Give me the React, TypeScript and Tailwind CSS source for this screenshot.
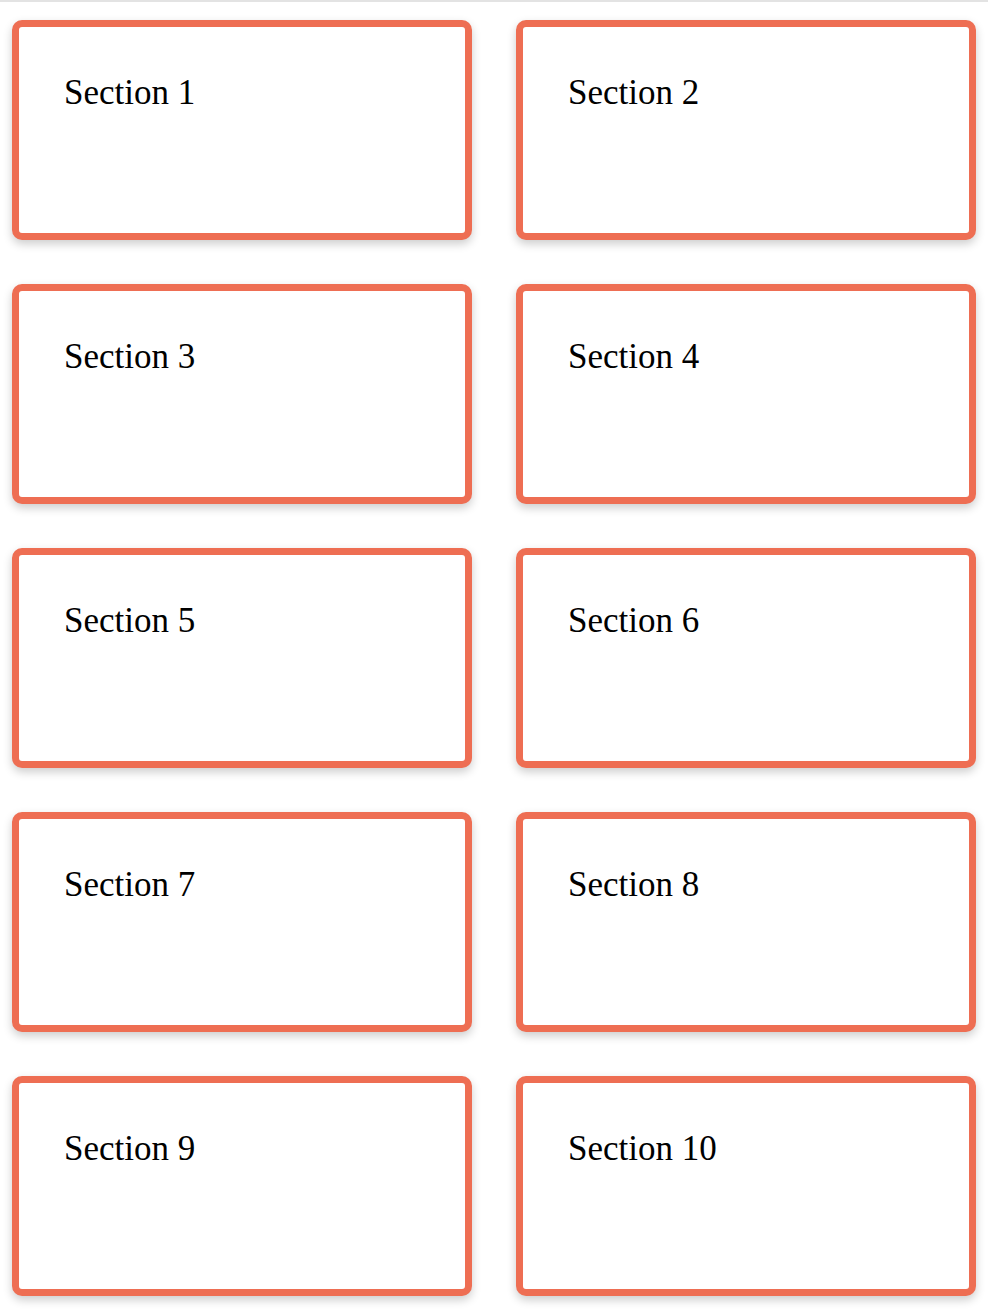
import React from "react";

export default function App() {
  const sections = Array.from({ length: 10 }, (_, i) => i + 1);
  return (
    <div className="min-h-[1316px] bg-white">
      <div className="h-[2px] bg-[#e3e3e3]" />
      <div className="grid grid-cols-2 gap-x-[44px] gap-y-[44px] px-[12px] pt-[18px] pb-[20px]">
        {sections.map((n) => (
          <div
            key={n}
            className="h-[220px] rounded-[10px] border-[7px] border-[#ee6e53] bg-white px-[45px] pt-[46px] shadow-[0_4px_10px_rgba(0,0,0,0.2)]"
          >
            <div
              className="text-[35px] leading-[40px] text-black"
              style={{ fontFamily: '"Liberation Serif", "Times New Roman", serif' }}
            >
              Section {n}
            </div>
          </div>
        ))}
      </div>
    </div>
  );
}
